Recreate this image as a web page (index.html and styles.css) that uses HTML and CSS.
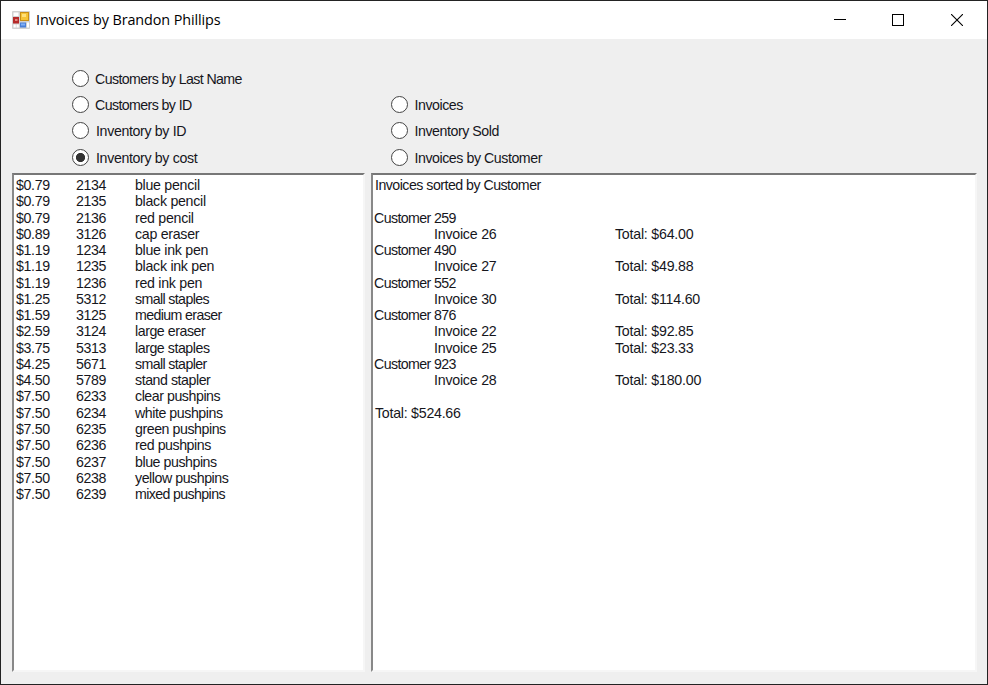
FILE: index.html
```html
<!DOCTYPE html>
<html lang="en">
<head>
<meta charset="utf-8">
<title>Invoices by Brandon Phillips</title>
<link rel="stylesheet" href="styles.css">
</head>
<body>
<div class="window">
  <header class="titlebar">
    <svg class="app-icon" width="18" height="18" viewBox="0 0 18 18">
      <rect width="18" height="18" rx="1" fill="#d2d2d2"/>
      <rect x="1.5" y="1.5" width="5" height="3.5" fill="#fff"/>
      <rect x="1" y="6" width="6" height="6.5" fill="#b62a2a"/>
      <rect x="3" y="8" width="2.5" height="2" fill="#e28a80"/>
      <rect x="1.5" y="13.5" width="2.3" height="3" fill="#fff"/>
      <rect x="4.5" y="13.5" width="2.3" height="3" fill="#fff"/>
      <rect x="8" y="1" width="9" height="9" fill="#c98f16"/>
      <rect x="9" y="2" width="7" height="7" fill="#f6c437"/>
      <rect x="10" y="3" width="4" height="3" fill="#ffe07a"/>
      <rect x="8" y="11.5" width="6" height="5" fill="#4a80d8"/>
      <rect x="9" y="12.5" width="4" height="2" fill="#82b0f5"/>
      <rect x="15" y="11.5" width="2" height="5" fill="#fff"/>
    </svg>
    <h1 class="title">Invoices by Brandon Phillips</h1>
    <div class="controls">
      <svg width="12" height="12" viewBox="0 0 12 12"><path d="M0 5.5H12" stroke="#000"/></svg>
      <svg width="12" height="12" viewBox="0 0 12 12"><rect x=".5" y=".5" width="11" height="11" fill="none" stroke="#000"/></svg>
      <svg width="12" height="12" viewBox="0 0 12 12"><path d="M0 0L12 12M12 0L0 12" stroke="#000" stroke-width="1.1"/></svg>
    </div>
  </header>
  <main class="content">
    <section class="column">
      <div class="options options-left">
        <div class="option"><i class="radio"></i><span class="tight">Customers by Last Name</span></div>
        <div class="option"><i class="radio"></i><span class="tight">Customers by ID</span></div>
        <div class="option"><i class="radio"></i><span class="inset">Inventory by ID</span></div>
        <div class="option"><i class="radio checked"></i><span class="inset">Inventory by cost</span></div>
      </div>
      <div class="box inventory">
        <div class="row"><span>$0.79</span><span>2134</span><span>blue pencil</span></div>
        <div class="row"><span>$0.79</span><span>2135</span><span>black pencil</span></div>
        <div class="row"><span>$0.79</span><span>2136</span><span>red pencil</span></div>
        <div class="row"><span>$0.89</span><span>3126</span><span>cap eraser</span></div>
        <div class="row"><span>$1.19</span><span>1234</span><span>blue ink pen</span></div>
        <div class="row"><span>$1.19</span><span>1235</span><span>black ink pen</span></div>
        <div class="row"><span>$1.19</span><span>1236</span><span>red ink pen</span></div>
        <div class="row narrow"><span>$1.25</span><span>5312</span><span>small staples</span></div>
        <div class="row narrow"><span>$1.59</span><span>3125</span><span>medium eraser</span></div>
        <div class="row snug"><span>$2.59</span><span>3124</span><span>large eraser</span></div>
        <div class="row snug"><span>$3.75</span><span>5313</span><span>large staples</span></div>
        <div class="row narrow"><span>$4.25</span><span>5671</span><span>small stapler</span></div>
        <div class="row snug"><span>$4.50</span><span>5789</span><span>stand stapler</span></div>
        <div class="row snug"><span>$7.50</span><span>6233</span><span>clear pushpins</span></div>
        <div class="row snug"><span>$7.50</span><span>6234</span><span>white pushpins</span></div>
        <div class="row snug"><span>$7.50</span><span>6235</span><span>green pushpins</span></div>
        <div class="row snug"><span>$7.50</span><span>6236</span><span>red pushpins</span></div>
        <div class="row snug"><span>$7.50</span><span>6237</span><span>blue pushpins</span></div>
        <div class="row snug"><span>$7.50</span><span>6238</span><span>yellow pushpins</span></div>
        <div class="row narrow"><span>$7.50</span><span>6239</span><span>mixed pushpins</span></div>
      </div>
    </section>
    <section class="column">
      <div class="options options-right">
        <div class="option"><i class="radio"></i><span>Invoices</span></div>
        <div class="option"><i class="radio"></i><span>Inventory Sold</span></div>
        <div class="option"><i class="radio"></i><span>Invoices by Customer</span></div>
      </div>
      <div class="box report">
        <div class="line heading">Invoices sorted by Customer</div>
        <div class="line"></div>
        <div class="line tight">Customer 259</div>
        <div class="line entry"><span>Invoice 26</span><span>Total: $64.00</span></div>
        <div class="line tight">Customer 490</div>
        <div class="line entry"><span>Invoice 27</span><span>Total: $49.88</span></div>
        <div class="line tight">Customer 552</div>
        <div class="line entry"><span>Invoice 30</span><span>Total: $114.60</span></div>
        <div class="line tight">Customer 876</div>
        <div class="line entry"><span>Invoice 22</span><span>Total: $92.85</span></div>
        <div class="line entry"><span>Invoice 25</span><span>Total: $23.33</span></div>
        <div class="line tight">Customer 923</div>
        <div class="line entry"><span>Invoice 28</span><span>Total: $180.00</span></div>
        <div class="line"></div>
        <div class="line total">Total: $524.66</div>
      </div>
    </section>
  </main>
</div>
</body>
</html>
```
FILE: styles.css
```css
* { box-sizing: border-box; }

body { margin: 0; background: #232323; }

.window {
  display: flex;
  flex-direction: column;
  width: 988px;
  height: 685px;
  border: 1px solid #232323;
  background: #efefef;
  color: #16161c;
  font: 14.2px/16.26px "Liberation Sans", Arial, sans-serif;
  letter-spacing: -0.35px;
}

.titlebar {
  display: flex;
  align-items: center;
  flex: none;
  height: 38px;
  padding: 0 24px 0 11px;
  background: #fff;
}

.title {
  margin: 0 0 0 6px;
  color: #000;
  font: 14.4px/20px "Open Sans", "Noto Sans", sans-serif;
  letter-spacing: -0.1px;
}

.controls {
  display: flex;
  gap: 46px;
  margin-left: auto;
}

.controls svg, .app-icon { display: block; }
.controls svg:nth-child(-n+2) { margin-left: -1px; margin-right: 1px; }

.content {
  display: grid;
  grid-template-columns: 353px 606px;
  column-gap: 6px;
  flex: 1;
  padding: 26px 0 12px 11px;
}

.column { display: flex; flex-direction: column; }

.options {
  display: flex;
  flex-direction: column;
  justify-content: flex-end;
  flex: none;
  height: 108px;
  padding-bottom: 2.8px;
}

.options-left { padding-left: 60px; }
.options-right { padding-left: 19.5px; letter-spacing: -0.45px; }

.option {
  display: flex;
  align-items: center;
  gap: 6px;
  height: 26.25px;
}

.option span { padding-top: 1.6px; }
.inset { margin-left: 1px; }
.options-right .option { gap: 7px; }
.tight { letter-spacing: -0.6px; }

.radio {
  width: 17px;
  height: 17px;
  border: 1.4px solid #444;
  border-radius: 50%;
  background: #fff;
}

.radio.checked { background: radial-gradient(circle, #333 4.2px, #fff 5px); }

.box {
  flex: 1;
  padding: 2px 0 0 1px;
  border: 2px solid;
  border-color: #777 #f6f6f6 #f6f6f6 #888;
  background: #fff;
}

.inventory { padding-left: 2px; }
.row { display: grid; grid-template-columns: 60px 59px 1fr; }
.row span:last-child { letter-spacing: -0.28px; }
.snug span:last-child { letter-spacing: -0.45px; }
.narrow span:last-child { letter-spacing: -0.62px; }

.line { height: 16.26px; }
.heading { padding-left: 1px; letter-spacing: -0.52px; }
.total { padding-left: 1px; letter-spacing: -0.25px; }

.entry {
  display: grid;
  grid-template-columns: 181px 1fr;
  padding-left: 60px;
  letter-spacing: -0.22px;
}
```
